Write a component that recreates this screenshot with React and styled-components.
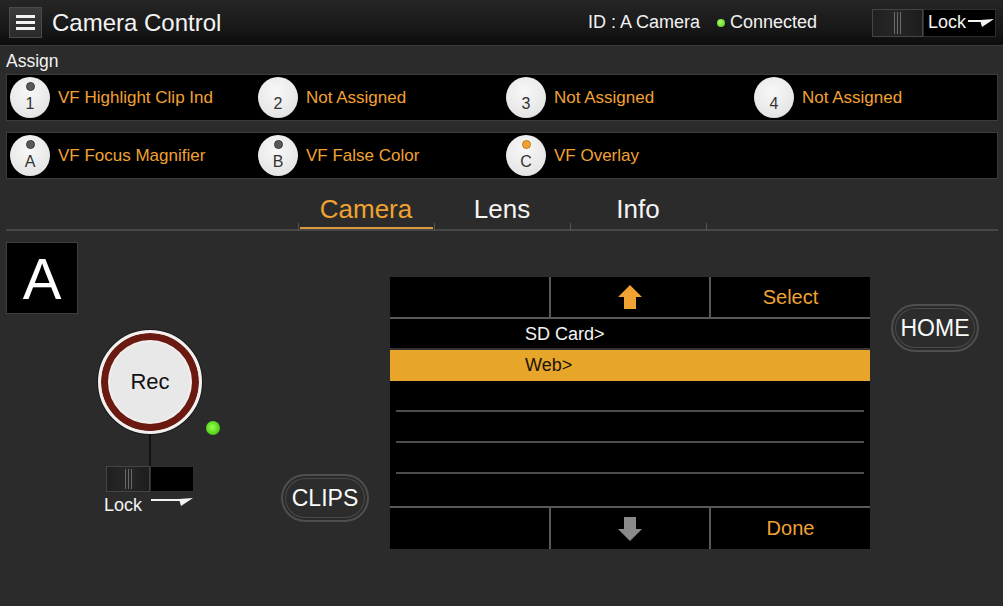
import React from "react";
import styled, { createGlobalStyle } from "styled-components";

const ORANGE = "#f0a232";

const Global = createGlobalStyle`
  html, body { margin: 0; padding: 0; background: #2b2b2b; }
  body { font-family: "Liberation Sans", Arial, sans-serif; color: #fff; }
  * { box-sizing: border-box; }
`;

const Page = styled.div`
  width: 1003px;
  height: 606px;
  background: #2b2b2b;
  overflow: hidden;
`;

const Header = styled.header`
  height: 46px;
  display: flex;
  align-items: center;
  padding: 0 7px 0 9px;
  background: linear-gradient(#262626, #161616 70%, #0c0c0c);
  border-bottom: 1px solid #3c3c3c;
`;

const MenuButton = styled.div`
  width: 33px;
  height: 31px;
  border: 1px solid #4a4a4a;
  background: linear-gradient(#3c3c3c, #2a2a2a);
  display: flex;
  flex-direction: column;
  justify-content: center;
  align-items: center;
  gap: 3px;
  span {
    display: block;
    width: 19px;
    height: 3px;
    background: #f2f2f2;
  }
`;

const Title = styled.h1`
  margin: 0 0 0 10px;
  font-size: 24px;
  font-weight: normal;
  color: #f4f4f4;
`;

const Status = styled.div`
  margin-left: auto;
  display: flex;
  align-items: center;
  font-size: 18px;
  color: #f2f2f2;
`;

const Dot = styled.span`
  width: 8px;
  height: 8px;
  border-radius: 50%;
  background: radial-gradient(circle at 40% 40%, #a8ff60, #4cc21a);
  margin: 0 5px 0 17px;
`;

const TopLock = styled.div`
  margin-left: 55px;
  display: flex;
  height: 28px;
  width: 124px;
`;

const SwitchKnob = styled.div`
  width: ${(p) => p.$w}px;
  height: 100%;
  border: 1px solid #454545;
  background: linear-gradient(90deg, #202020, #272727 50%, #1c1c1c);
  display: flex;
  justify-content: center;
  align-items: stretch;
  gap: 2px;
  padding: 2px 0;
  i {
    display: block;
    width: 1px;
    background: #6a6a6a;
  }
`;

const SwitchSlot = styled.div`
  flex: 1;
  height: 100%;
  background: #000;
  border: 1px solid #2e2e2e;
  display: flex;
  align-items: center;
  padding-left: 4px;
  gap: 2px;
  font-size: 18px;
  color: #f2f2f2;
`;

const AssignLabel = styled.div`
  height: 28px;
  padding-top: 1px;
  line-height: 28px;
  padding-left: 6px;
  font-size: 17.5px;
  color: #f2f2f2;
`;

const AssignRows = styled.div`
  display: flex;
  flex-direction: column;
  gap: 11px;
  margin: 0 5px 0 6px;
`;

const AssignRow = styled.div`
  display: grid;
  grid-template-columns: repeat(4, 248px);
  align-items: center;
  height: 47px;
  background: #000;
  border: 1px solid #3c3c3c;
  padding-left: 3px;
`;

const Slot = styled.div`
  display: flex;
  align-items: center;
  gap: 8px;
  font-size: 17px;
  color: ${ORANGE};
`;

const Badge = styled.div`
  width: 40px;
  height: 41px;
  border-radius: 50%;
  background: radial-gradient(circle at 45% 35%, #f8f8f8, #e6e6e6 70%, #d6d6d6);
  display: flex;
  flex-direction: column;
  align-items: center;
  padding-top: 5px;
  color: #333;
  font-size: 16px;
  line-height: 1;
`;

const BadgeDot = styled.span`
  width: 9px;
  height: 9px;
  border-radius: 50%;
  background: ${(p) => (p.$on ? "#f0a232" : p.$none ? "transparent" : "#5a5a5a")};
  border: 1px solid ${(p) => (p.$none ? "transparent" : p.$on ? "#c07a18" : "#3a3a3a")};
  margin-bottom: 5px;
`;

const TabBar = styled.div`
  margin: 11px 5px 0 6px;
  display: flex;
  padding-left: 292px;
  border-bottom: 2px solid #474747;
`;

const Tab = styled.div`
  position: relative;
  width: 136px;
  height: 39px;
  display: flex;
  justify-content: center;
  align-items: center;
  font-size: 26px;
  color: ${(p) => (p.$active ? ORANGE : "#f4f4f4")};
  &::after {
    content: "";
    position: absolute;
    left: 2px;
    right: 1px;
    bottom: 0;
    height: 2px;
    background: ${(p) => (p.$active ? "#d89a3c" : "transparent")};
  }
  &::before {
    content: "";
    position: absolute;
    left: 0;
    bottom: -2px;
    width: 1px;
    height: 8px;
    background: #555;
  }
`;

const Main = styled.div`
  display: flex;
  align-items: flex-start;
  padding: 11px 6px 0;
`;

const LeftCol = styled.div`
  width: 275px;
  display: flex;
  flex-direction: column;
  align-items: flex-start;
`;

const CamBox = styled.div`
  width: 72px;
  height: 72px;
  background: #000;
  border: 1px solid #3e3e3e;
  display: flex;
  justify-content: center;
  align-items: center;
  font-size: 58px;
  color: #fff;
`;

const RecGroup = styled.div`
  position: relative;
  margin: 16px 0 0 92px;
  width: 104px;
  display: flex;
  flex-direction: column;
  align-items: center;
`;

const RecButton = styled.div`
  width: 104px;
  height: 104px;
  border-radius: 50%;
  border: 3px solid #f3f1f0;
  box-shadow: 0 0 0 1px #1a1a1a, inset 0 0 0 7px #6a1a10, inset 0 0 0 9px #f2eeee;
  background: #e8e8e8;
  display: flex;
  justify-content: center;
  align-items: center;
  font-size: 22px;
  color: #111;
`;

const Led = styled.span`
  position: absolute;
  left: 108px;
  top: 91px;
  width: 14px;
  height: 14px;
  border-radius: 50%;
  background: radial-gradient(circle at 45% 45%, #9cff50, #55d41c 60%, #3a9a14);
`;

const Stem = styled.div`
  width: 2px;
  height: 32px;
  background: #111;
`;

const BottomSwitch = styled.div`
  display: flex;
  width: 88px;
  height: 26px;
`;

const LockLabels = styled.div`
  width: 90px;
  margin-left: -2px;
  display: flex;
  justify-content: space-between;
  align-items: flex-start;
  font-size: 18px;
  color: #f4f4f4;
  padding-top: 3px;
  svg { margin-top: 2px; margin-right: 1px; }
`;

const Pill = styled.div`
  width: 88px;
  height: 48px;
  border-radius: 24px;
  border: 2px solid #4e4e4e;
  box-shadow: inset 0 0 0 2px #2a2a2a, inset 0 0 0 3px #4a4a4a;
  background: #2c2c2c;
  display: flex;
  justify-content: center;
  align-items: center;
  font-size: 23px;
  color: #fafafa;
  margin-top: ${(p) => p.$top}px;
  margin-left: ${(p) => p.$left || 0}px;
`;

const Panel = styled.div`
  margin: 35px 0 0 21px;
  width: 480px;
  background: #000;
  display: flex;
  flex-direction: column;
`;

const Bar = styled.div`
  display: grid;
  grid-template-columns: 159px 158px 159px;
  gap: 2px;
  background: #595959;
  ${(p) => (p.$bottom ? "border-top: 2px solid #595959;" : "border-bottom: 2px solid #595959;")}
`;

const BarCell = styled.div`
  height: ${(p) => p.$h || 40}px;
  background: #000;
  display: flex;
  justify-content: center;
  align-items: center;
  font-size: 20px;
  color: ${ORANGE};
`;

const Row = styled.div`
  position: relative;
  height: ${(p) => p.$h || 31}px;
  display: flex;
  align-items: center;
  padding-left: 135px;
  font-size: 18px;
  background: ${(p) => (p.$selected ? "#e7a62a" : "#000")};
  color: ${(p) => (p.$selected ? "#1a1206" : "#f4f4f4")};
  &::after {
    content: "";
    position: absolute;
    left: ${(p) => (p.$full ? 0 : 6)}px;
    right: ${(p) => (p.$full ? 0 : 6)}px;
    bottom: 0;
    height: ${(p) => (p.$line ? 2 : 0)}px;
    background: ${(p) => (p.$full ? "#333" : "#4c4c4c")};
  }
`;

const Arrow = ({ color, down }) => (
  <svg width="24" height="24" viewBox="0 0 24 24" style={down ? { transform: "rotate(180deg)" } : undefined}>
    <polygon points="12,0 24,12 18,12 18,24 6,24 6,12 0,12" fill={color} />
  </svg>
);

const LockArrow = ({ w = 26 }) => (
  <svg width={w} height="10" viewBox={`0 0 ${w} 10`}>
    <rect x="0" y="2" width={w - 4} height="2" fill="#f4f4f4" />
    <polygon points={`${w - 14},2 ${w},1 ${w - 12},9`} fill="#f4f4f4" />
  </svg>
);

const Knob = ({ w }) => (
  <SwitchKnob $w={w}>
    <i />
    <i />
    <i />
  </SwitchKnob>
);

const row1 = [
  { n: "1", t: "VF Highlight Clip Ind", dot: "off" },
  { n: "2", t: "Not Assigned", dot: "none" },
  { n: "3", t: "Not Assigned", dot: "none" },
  { n: "4", t: "Not Assigned", dot: "none" },
];
const row2 = [
  { n: "A", t: "VF Focus Magnifier", dot: "off" },
  { n: "B", t: "VF False Color", dot: "off" },
  { n: "C", t: "VF Overlay", dot: "on" },
];

const SlotItem = ({ n, t, dot }) => (
  <Slot>
    <Badge>
      <BadgeDot $on={dot === "on"} $none={dot === "none"} />
      {n}
    </Badge>
    {t}
  </Slot>
);

export default function App() {
  return (
    <Page>
      <Global />
      <Header>
        <MenuButton>
          <span />
          <span />
          <span />
        </MenuButton>
        <Title>Camera Control</Title>
        <Status>
          ID : A Camera
          <Dot />
          Connected
        </Status>
        <TopLock>
          <Knob w={51} />
          <SwitchSlot>
            Lock
            <LockArrow w={26} />
          </SwitchSlot>
        </TopLock>
      </Header>

      <AssignLabel>Assign</AssignLabel>
      <AssignRows>
        <AssignRow>
          {row1.map((s) => (
            <SlotItem key={s.n} {...s} />
          ))}
        </AssignRow>
        <AssignRow>
          {row2.map((s) => (
            <SlotItem key={s.n} {...s} />
          ))}
        </AssignRow>
      </AssignRows>

      <TabBar>
        <Tab $active>Camera</Tab>
        <Tab>Lens</Tab>
        <Tab>Info</Tab>
        <Tab />
      </TabBar>

      <Main>
        <LeftCol>
          <CamBox>A</CamBox>
          <RecGroup>
            <RecButton>Rec</RecButton>
            <Led />
            <Stem />
            <BottomSwitch>
              <Knob w={44} />
              <SwitchSlot />
            </BottomSwitch>
            <LockLabels>
              Lock
              <LockArrow w={42} />
            </LockLabels>
          </RecGroup>
        </LeftCol>
        <Pill $top={232}>CLIPS</Pill>
        <Panel>
          <Bar>
            <BarCell />
            <BarCell>
              <Arrow color="#f0a232" />
            </BarCell>
            <BarCell>Select</BarCell>
          </Bar>
          <Row $line $full>SD Card&gt;</Row>
          <Row $selected>Web&gt;</Row>
          <Row $line />
          <Row $line />
          <Row $line />
          <Row $h={32} />
          <Bar $bottom>
            <BarCell $h={41} />
            <BarCell $h={41}>
              <Arrow color="#8a8a8a" down />
            </BarCell>
            <BarCell $h={41}>Done</BarCell>
          </Bar>
        </Panel>
        <Pill $top={62} $left={21}>HOME</Pill>
      </Main>
    </Page>
  );
}
